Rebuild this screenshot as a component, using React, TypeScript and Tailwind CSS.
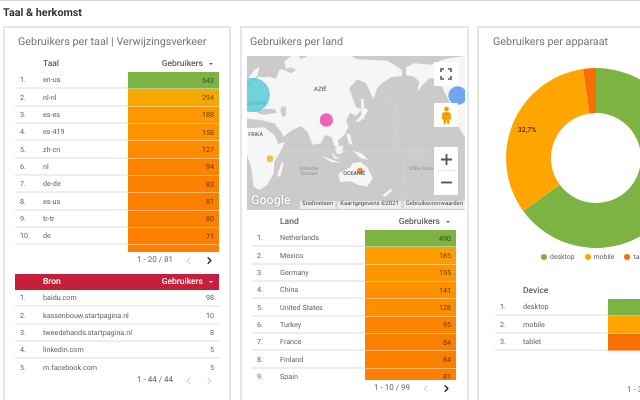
import { ChevronLeft, ChevronRight } from "lucide-react";

type Row = { label: string; value: number; color?: string };

const taalRows: Row[] = [
  { label: "en-us", value: 543, color: "bg-[#7cb342]" },
  { label: "nl-nl", value: 294, color: "bg-[#f5a800]" },
  { label: "es-es", value: 188, color: "bg-[#ff9800]" },
  { label: "es-419", value: 158, color: "bg-[#ff9300]" },
  { label: "zh-cn", value: 127, color: "bg-[#fd8c00]" },
  { label: "nl", value: 94, color: "bg-[#fb8300]" },
  { label: "de-de", value: 83, color: "bg-[#fb8100]" },
  { label: "es-us", value: 81, color: "bg-[#fc8000]" },
  { label: "tr-tr", value: 80, color: "bg-[#fc8000]" },
  { label: "de", value: 71, color: "bg-[#fd7f00]" },
  { label: "", value: 0, color: "bg-[#fd7f00]" },
];

const bronRows: Row[] = [
  { label: "baidu.com", value: 98 },
  { label: "kassenbouw.startpagina.nl", value: 10 },
  { label: "tweedehands.startpagina.nl", value: 8 },
  { label: "linkedin.com", value: 5 },
  { label: "m.facebook.com", value: 5 },
];

const landRows: Row[] = [
  { label: "Netherlands", value: 490, color: "bg-[#7cb342]" },
  { label: "Mexico", value: 185, color: "bg-[#ff9e00]" },
  { label: "Germany", value: 155, color: "bg-[#ff9500]" },
  { label: "China", value: 141, color: "bg-[#ff9000]" },
  { label: "United States", value: 128, color: "bg-[#fd8e00]" },
  { label: "Turkey", value: 95, color: "bg-[#fb8400]" },
  { label: "France", value: 84, color: "bg-[#fb8000]" },
  { label: "Finland", value: 84, color: "bg-[#fb8000]" },
  { label: "Spain", value: 81, color: "bg-[#fb7f00]" },
];

const deviceRows: Row[] = [
  { label: "desktop", value: 0, color: "bg-[#7cb342]" },
  { label: "mobile", value: 0, color: "bg-[#ffa500]" },
  { label: "tablet", value: 0, color: "bg-[#f96e00]" },
];

function Pager({ text, next = false }: { text: string; next?: boolean }) {
  return (
    <div className="flex h-4 items-center justify-end pr-[4px] text-[8px] text-[#666]">
      <span>{text}</span>
      <ChevronLeft size={11} strokeWidth={1.5} className="ml-[10px] text-[#999]" />
      <ChevronRight
        size={11}
        strokeWidth={next ? 3 : 1.5}
        className={next ? "ml-[10px] text-[#222]" : "ml-[10px] text-[#999]"}
      />
    </div>
  );
}

function Rows({ rows, clip }: { rows: Row[]; clip: string }) {
  return (
    <div className={`overflow-hidden ${clip}`}>
      {rows.map((row, i) => (
        <div key={i} className="grid h-[17.33px] grid-cols-[28px_85px_1fr] text-[7.2px] text-[#616161]">
          <div className="flex items-center border-b-2 border-[#eeeeee] pl-[5px] pt-[2px]">
            {row.label ? `${i + 1}.` : ""}
          </div>
          <div className="flex items-center whitespace-nowrap border-b-2 border-[#eeeeee] pt-[2px]">{row.label}</div>
          <div
            className={`flex items-center justify-end pr-[5px] pt-[2px] ${
              row.color
                ? `${row.color} border-b border-white/40 text-black/60`
                : "border-b-2 border-[#eeeeee]"
            }`}
          >
            {row.value > 0 ? row.value : ""}
          </div>
        </div>
      ))}
    </div>
  );
}

function Header({ label, red = false }: { label: string; red?: boolean }) {
  return (
    <div
      className={`grid h-4 grid-cols-[28px_85px_1fr] items-center text-[8.5px] font-medium ${
        red ? "bg-[#c51f3b] text-white" : "text-[#5f5f5f]"
      }`}
    >
      <span />
      <span>{label}</span>
      <span className="flex items-center justify-end pr-[6px]">
        Gebruikers
        <span className="ml-[6px] h-0 w-0 border-x-[2px] border-t-[2px] border-x-transparent border-t-current" />
      </span>
    </div>
  );
}

function WorldMap() {
  return (
    <svg viewBox="18 108 654 462" className="absolute inset-0 h-full w-full">
      <rect x="18" y="108" width="654" height="462" fill="#cbcbcb" />
      {/* eurasia */}
      <path
        fill="#f6f6f6"
        d="M18 205 L50 172 L85 170 L105 176 L115 150 L135 148 L130 125 L150 108 L172 108 L180 118 L200 108 L330 108 L350 118 L440 122 L483 150 L483 168 L450 172 L425 188 L408 205 L398 238 L385 210 L375 190 L348 178 L325 205 L335 235 L345 262 L362 268 L345 288 L328 278 L316 300 L322 322 L310 345 L290 362 L296 385 L280 378 L272 352 L252 345 L240 370 L215 374 L200 335 L180 318 L150 332 L128 350 L118 332 L100 312 L60 306 L18 300 Z"
      />
      {/* africa */}
      <path
        fill="#f6f6f6"
        d="M18 325 L70 322 L100 345 L112 372 L132 366 L118 395 L100 425 L98 460 L78 495 L55 510 L38 500 L30 440 L18 405 Z"
      />
      {/* north america */}
      <path
        fill="#f6f6f6"
        d="M495 142 L520 130 L570 134 L610 118 L640 112 L672 108 L672 352 L640 300 L625 245 L590 175 L565 175 L545 195 L528 215 L535 185 L520 170 L495 165 Z"
      />
      {/* seas and islands */}
      <path fill="#cbcbcb" d="M46 268 L100 266 L108 278 L70 284 L50 280 Z" />
      <path fill="#cbcbcb" d="M122 258 L136 262 L134 288 L124 290 L118 270 Z" />
      <path fill="#cbcbcb" d="M18 296 L60 300 L105 312 L100 318 L50 314 L18 318 Z" />
      <path fill="#cbcbcb" d="M128 150 L150 142 L165 150 L150 160 Z" />
      <path fill="#f6f6f6" d="M18 180 L40 150 L55 140 L50 165 L30 190 Z" />
      <path fill="#f6f6f6" d="M360 238 L368 236 L370 298 L362 296 Z" />
      <path fill="#f6f6f6" d="M372 262 L382 272 L358 304 L342 306 L362 284 Z" />
      <path fill="#f6f6f6" d="M270 395 L285 410 L300 415 L280 416 Z" />
      <path fill="#f6f6f6" d="M282 385 L306 376 L304 400 L288 402 Z" />
      <path fill="#f6f6f6" d="M316 340 L328 344 L334 376 L322 368 Z" />
      <path fill="#f6f6f6" d="M335 392 L362 400 L382 420 L358 414 Z" />
      <path fill="#f6f6f6" d="M242 408 L300 428 L270 426 Z" />
      <path fill="#f6f6f6" d="M108 468 L122 426 L128 432 L118 470 Z" />
      <path fill="#f6f6f6" d="M292 462 L330 440 L334 430 L358 426 L378 440 L396 475 L378 500 L350 494 L330 484 L298 486 Z" />
      <path fill="#f6f6f6" d="M424 526 L450 506 L453 512 L432 530 Z" />
      {/* dashed lines */}
      <path
        fill="none"
        stroke="#e4e4e4"
        strokeWidth="1.5"
        strokeDasharray="5 4"
        d="M100 392 L460 392 L500 392 L672 392 M480 150 L430 230 L462 250 L462 395 M500 392 L525 378 L535 405 L490 420 L480 570"
      />
      {/* map labels */}
      <g fontFamily="Roboto, sans-serif" fontWeight="500">
        <text x="238" y="214" fontSize="18" textAnchor="middle" fill="#666">AZIË</text>
        <text x="45" y="254" fontSize="16" textAnchor="middle" fill="#4b7580">EUROPA</text>
        <text x="44" y="348" fontSize="16" textAnchor="middle" fill="#666">FRIKA</text>
        <text x="204" y="449" fontSize="15" textAnchor="middle" fill="#9a9a9a">Indische</text>
        <text x="204" y="464" fontSize="15" textAnchor="middle" fill="#9a9a9a">Oceaan</text>
        <text x="540" y="451" fontSize="15" textAnchor="middle" fill="#9a9a9a">Stille Ocea</text>
      </g>
      {/* bubbles */}
      <circle cx="35" cy="225" r="50" fill="#4fc9d8" fillOpacity="0.8" stroke="#46c0d2" strokeWidth="2" />
      <circle cx="256" cy="300" r="20" fill="#ef62b9" />
      <circle cx="650" cy="227" r="28" fill="#6ea6ef" />
      <circle cx="87" cy="416" r="10" fill="#f8bf4f" />
      <circle cx="357" cy="452" r="9" fill="#ef933a" />
      <text x="340" y="465" fontSize="16" fontWeight="500" fontFamily="Roboto, sans-serif" textAnchor="middle" fill="#555">OCEANIË</text>
    </svg>
  );
}

function MapPanel() {
  return (
    <div className="relative ml-[5px] h-[154px] w-[218px] overflow-hidden">
      <WorldMap />
      {/* fullscreen */}
      <div className="absolute left-[187px] top-[6px] flex h-6 w-6 items-center justify-center rounded-[1px] bg-white">
        <svg viewBox="0 0 12 12" className="h-3 w-3" fill="none" stroke="#555" strokeWidth="1.6">
          <path d="M1 4V1h3M8 1h3v3M11 8v3H8M4 11H1V8" />
        </svg>
      </div>
      {/* street view */}
      <div className="absolute left-[187px] top-[47px] flex h-6 w-6 items-center justify-center rounded-[1px] bg-white">
        <svg viewBox="0 0 12 20" className="h-[19px] w-[11px]" fill="#f0a400">
          <circle cx="6" cy="3" r="2.6" />
          <path d="M3 6.5h6l2 1.5v6H9.5L9 19.5H7L6 15l-1 4.5H3L2.5 14H1V8z" />
          <path d="M5 7.5h2L6 9.5z" fill="#d9502a" />
        </svg>
      </div>
      {/* zoom */}
      <div className="absolute left-[187px] top-[91px] flex h-12 w-6 flex-col items-center rounded-[1px] bg-white">
        <svg viewBox="0 0 12 12" className="mt-[7px] h-[11px] w-[11px]" fill="none" stroke="#555" strokeWidth="2">
          <path d="M6 0v12M0 6h12" />
        </svg>
        <div className="mt-[5px] h-px w-[18px] bg-[#e6e6e6]" />
        <svg viewBox="0 0 12 12" className="mt-[6px] h-[11px] w-[11px]" fill="none" stroke="#555" strokeWidth="2">
          <path d="M0 6h12" />
        </svg>
      </div>
      {/* google logo */}
      <span className="absolute left-[4px] top-[139px] text-[12.5px] font-medium leading-none text-white [text-shadow:0_0_2px_#8a8a8a]">
        Google
      </span>
      {/* attribution */}
      <div className="absolute bottom-[1px] right-0 flex h-[8px] items-center gap-[3px] whitespace-nowrap bg-[#d8d8d8] text-[5.9px] leading-none text-[#444]">
        <span className="bg-[#eeeeee] px-[2px] py-px">Sneltoetsen</span>
        <span className="bg-[#eeeeee] px-[2px] py-px">Kaartgegevens ©2021</span>
        <span className="bg-[#eeeeee] px-[2px] py-px">Gebruiksvoorwaarden</span>
      </div>
    </div>
  );
}

function DevicePie() {
  return (
    <svg viewBox="0 0 180 180" className="ml-[27px] mt-3 h-[180px] w-[180px] overflow-visible">
      <path d="M90 0A90 90 0 1 1 17.2 142.9L53.6 116.5A45 45 0 1 0 90 45Z" fill="#7cb342" />
      <path d="M17.2 142.9A90 90 0 0 1 77 1L83.5 45.5A45 45 0 0 0 53.6 116.5Z" fill="#ffa500" />
      <path d="M77 1A90 90 0 0 1 90 0L90 45A45 45 0 0 0 83.5 45.5Z" fill="#f96e00" />
      <text x="21" y="64" fontSize="7" fontWeight="500" textAnchor="middle" fontFamily="Roboto, sans-serif" fill="#3d2a00">
        32,7%
      </text>
    </svg>
  );
}

export default function App() {
  return (
    <div className="h-[400px] w-[640px] overflow-hidden border-t border-[#d8d8d8] bg-white font-['Roboto',sans-serif] blur-[0.4px] [text-rendering:geometricPrecision]">
      <h2 className="ml-[3px] flex h-[25px] items-center text-[10.8px] font-bold text-[#333]">Taal &amp; herkomst</h2>
      <div className="flex h-[374px] items-stretch">
        {/* taal */}
        <section className="ml-[3px] w-[228px] shrink-0 border-2 border-b-0 border-[#e6e6e6] pl-[10px] pr-[10px]">
          <h3 className="flex h-[28px] items-center whitespace-nowrap pl-[3px] text-[10.8px] text-[#757575]">
            Gebruikers per taal | Verwijzingsverkeer
          </h3>
          <Header label="Taal" />
          <Rows rows={taalRows} clip="h-[180px]" />
          <Pager text="1 - 20 / 81" next />
          <div className="mt-[6px]">
            <Header label="Bron" red />
          </div>
          <Rows rows={bronRows} clip="h-[82px]" />
          <Pager text="1 - 44 / 44" />
        </section>

        {/* land */}
        <section className="ml-[9px] w-[229px] shrink-0 border-2 border-b-0 border-[#e6e6e6]">
          <h3 className="flex h-[28px] items-center pl-[8px] text-[10.8px] text-[#757575]">Gebruikers per land</h3>
          <MapPanel />
          <div className="ml-[10px] mr-[11px] mt-[4px]">
            <Header label="Land" />
            <Rows rows={landRows} clip="h-[150px]" />
            <Pager text="1 - 10 / 99" next />
          </div>
        </section>

        {/* apparaat */}
        <section className="ml-[8px] w-[229px] shrink-0 border-2 border-b-0 border-[#e6e6e6]">
          <h3 className="flex h-[28px] items-center pl-[14px] text-[10.8px] text-[#757575]">Gebruikers per apparaat</h3>
          <DevicePie />
          <div className="ml-[62px] mt-1 flex h-[10px] items-center whitespace-nowrap text-[6.9px] text-[#616161]">
            <span className="mr-[3px] h-[6px] w-[6px] rounded-full bg-[#7cb342]" />
            desktop
            <span className="ml-[10px] mr-[3px] h-[6px] w-[6px] rounded-full bg-[#ffa500]" />
            mobile
            <span className="ml-[10px] mr-[3px] h-[6px] w-[6px] rounded-full bg-[#f96e00]" />
            tablet
          </div>
          <div className="ml-[16px] mt-[21px] w-[205px]">
            <div className="grid h-4 grid-cols-[28px_85px_1fr] items-center text-[8.5px] font-medium text-[#5f5f5f]">
              <span />
              <span>Device</span>
            </div>
            <Rows rows={deviceRows} clip="h-[52px]" />
            <div className="ml-[132px] mt-[31px] flex h-4 items-center text-[8px] text-[#666]">1 - 3 / 3</div>
          </div>
        </section>
      </div>
    </div>
  );
}
